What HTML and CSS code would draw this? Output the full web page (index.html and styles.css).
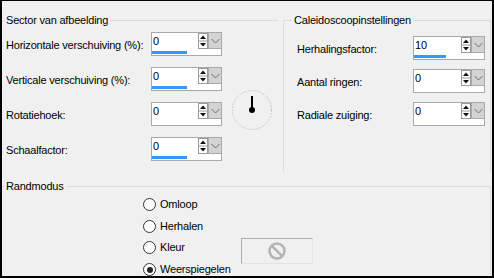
FILE: index.html
```html
<!DOCTYPE html>
<html lang="nl">
<head>
    <meta charset="UTF-8">
    <title>Caleidoscoop</title>
    <link rel="stylesheet" href="styles.css">
</head>
<body>
<div class="window">
    <div class="top">
        <!-- Sector -->
        <fieldset class="group sector">
            <legend>Sector van afbeelding</legend>
            <div class="rows sector-rows">
                <span class="lbl">Horizontale verschuiving (%):</span>
                <div class="spin">
                    <div class="spin-top">
                        <span class="spin-value">0</span>
                        <span class="spin-arrows"><svg width="10" height="16" viewBox="0 0 10 16"><rect x="0.5" y="0.5" width="9" height="15" fill="#fff" stroke="#9a9a9a"/><line x1="0" y1="8" x2="10" y2="8" stroke="#9a9a9a"/><path d="M5 2.5 L8 6 L2 6 Z" fill="#111"/><path d="M2 10 L8 10 L5 13.5 Z" fill="#111"/></svg></span>
                        <span class="spin-drop"><svg width="13" height="16" viewBox="0 0 13 16"><path d="M2.5 6 L6.5 10 L10.5 6" fill="none" stroke="#6d6d6d"/></svg></span>
                    </div>
                    <div class="spin-bar"><span class="bar" style="width:35px"></span></div>
                </div>
                <span class="cell-empty"></span>

                <span class="lbl">Verticale verschuiving (%):</span>
                <div class="spin">
                    <div class="spin-top">
                        <span class="spin-value">0</span>
                        <span class="spin-arrows"><svg width="10" height="16" viewBox="0 0 10 16"><rect x="0.5" y="0.5" width="9" height="15" fill="#fff" stroke="#9a9a9a"/><line x1="0" y1="8" x2="10" y2="8" stroke="#9a9a9a"/><path d="M5 2.5 L8 6 L2 6 Z" fill="#111"/><path d="M2 10 L8 10 L5 13.5 Z" fill="#111"/></svg></span>
                        <span class="spin-drop"><svg width="13" height="16" viewBox="0 0 13 16"><path d="M2.5 6 L6.5 10 L10.5 6" fill="none" stroke="#6d6d6d"/></svg></span>
                    </div>
                    <div class="spin-bar"><span class="bar" style="width:35px"></span></div>
                </div>
                <span class="cell-empty"></span>

                <span class="lbl">Rotatiehoek:</span>
                <div class="spin">
                    <div class="spin-top">
                        <span class="spin-value">0</span>
                        <span class="spin-arrows"><svg width="10" height="16" viewBox="0 0 10 16"><rect x="0.5" y="0.5" width="9" height="15" fill="#fff" stroke="#9a9a9a"/><line x1="0" y1="8" x2="10" y2="8" stroke="#9a9a9a"/><path d="M5 2.5 L8 6 L2 6 Z" fill="#111"/><path d="M2 10 L8 10 L5 13.5 Z" fill="#111"/></svg></span>
                        <span class="spin-drop"><svg width="13" height="16" viewBox="0 0 13 16"><path d="M2.5 6 L6.5 10 L10.5 6" fill="none" stroke="#6d6d6d"/></svg></span>
                    </div>
                    <div class="spin-bar"></div>
                </div>
                <div class="dial">
                    <svg width="42" height="42" viewBox="0 0 42 42">
                        <circle cx="21" cy="21" r="19.5" fill="none" stroke="#fafafa" stroke-width="1"/>
                        <circle cx="21" cy="21" r="19.5" fill="none" stroke="#c4c4c4" stroke-width="1" stroke-dasharray="2 1"/>
                        <line x1="21" y1="7" x2="21" y2="21" stroke="#000" stroke-width="2"/>
                        <circle cx="21" cy="21" r="3" fill="#000"/>
                    </svg>
                </div>

                <span class="lbl">Schaalfactor:</span>
                <div class="spin">
                    <div class="spin-top">
                        <span class="spin-value">0</span>
                        <span class="spin-arrows"><svg width="10" height="16" viewBox="0 0 10 16"><rect x="0.5" y="0.5" width="9" height="15" fill="#fff" stroke="#9a9a9a"/><line x1="0" y1="8" x2="10" y2="8" stroke="#9a9a9a"/><path d="M5 2.5 L8 6 L2 6 Z" fill="#111"/><path d="M2 10 L8 10 L5 13.5 Z" fill="#111"/></svg></span>
                        <span class="spin-drop"><svg width="13" height="16" viewBox="0 0 13 16"><path d="M2.5 6 L6.5 10 L10.5 6" fill="none" stroke="#6d6d6d"/></svg></span>
                    </div>
                    <div class="spin-bar"><span class="bar" style="width:35px"></span></div>
                </div>
                <span class="cell-empty"></span>
            </div>
        </fieldset>

        <!-- Caleidoscoop -->
        <fieldset class="group kaleido">
            <legend>Caleidoscoopinstellingen</legend>
            <div class="rows kaleido-rows">
                <span class="lbl">Herhalingsfactor:</span>
                <div class="spin spin-wide">
                    <div class="spin-top">
                        <span class="spin-value">10</span>
                        <span class="spin-arrows"><svg width="10" height="16" viewBox="0 0 10 16"><rect x="0.5" y="0.5" width="9" height="15" fill="#fff" stroke="#9a9a9a"/><line x1="0" y1="8" x2="10" y2="8" stroke="#9a9a9a"/><path d="M5 2.5 L8 6 L2 6 Z" fill="#111"/><path d="M2 10 L8 10 L5 13.5 Z" fill="#111"/></svg></span>
                        <span class="spin-drop"><svg width="13" height="16" viewBox="0 0 13 16"><path d="M2.5 6 L6.5 10 L10.5 6" fill="none" stroke="#6d6d6d"/></svg></span>
                    </div>
                    <div class="spin-bar"><span class="bar" style="width:32px"></span></div>
                </div>

                <span class="lbl">Aantal ringen:</span>
                <div class="spin spin-wide">
                    <div class="spin-top">
                        <span class="spin-value">0</span>
                        <span class="spin-arrows"><svg width="10" height="16" viewBox="0 0 10 16"><rect x="0.5" y="0.5" width="9" height="15" fill="#fff" stroke="#9a9a9a"/><line x1="0" y1="8" x2="10" y2="8" stroke="#9a9a9a"/><path d="M5 2.5 L8 6 L2 6 Z" fill="#111"/><path d="M2 10 L8 10 L5 13.5 Z" fill="#111"/></svg></span>
                        <span class="spin-drop"><svg width="13" height="16" viewBox="0 0 13 16"><path d="M2.5 6 L6.5 10 L10.5 6" fill="none" stroke="#6d6d6d"/></svg></span>
                    </div>
                    <div class="spin-bar"></div>
                </div>

                <span class="lbl">Radiale zuiging:</span>
                <div class="spin spin-wide">
                    <div class="spin-top">
                        <span class="spin-value">0</span>
                        <span class="spin-arrows"><svg width="10" height="16" viewBox="0 0 10 16"><rect x="0.5" y="0.5" width="9" height="15" fill="#fff" stroke="#9a9a9a"/><line x1="0" y1="8" x2="10" y2="8" stroke="#9a9a9a"/><path d="M5 2.5 L8 6 L2 6 Z" fill="#111"/><path d="M2 10 L8 10 L5 13.5 Z" fill="#111"/></svg></span>
                        <span class="spin-drop"><svg width="13" height="16" viewBox="0 0 13 16"><path d="M2.5 6 L6.5 10 L10.5 6" fill="none" stroke="#6d6d6d"/></svg></span>
                    </div>
                    <div class="spin-bar"></div>
                </div>
            </div>
        </fieldset>
    </div>

    <!-- Randmodus -->
    <fieldset class="group rand">
        <legend>Randmodus</legend>
        <div class="radios">
            <span class="radio"><span class="dot"></span>Omloop</span>
            <span class="cell-empty"></span>
            <span class="radio"><span class="dot"></span>Herhalen</span>
            <span class="cell-empty"></span>
            <span class="radio"><span class="dot"></span>Kleur</span>
            <div class="color-box">
                <svg width="20" height="20" viewBox="0 0 20 20">
                    <circle cx="10" cy="10" r="7.5" fill="none" stroke="#b4b4b4" stroke-width="2.5"/>
                    <line x1="4.8" y1="4.8" x2="15.2" y2="15.2" stroke="#b4b4b4" stroke-width="2.5"/>
                </svg>
            </div>
            <span class="radio"><span class="dot checked"></span>Weerspiegelen</span>
            <span class="cell-empty"></span>
        </div>
    </fieldset>
</div>
</body>
</html>
```

FILE: styles.css
```css
body {
    margin: 0;
    background-color: #f0f0f0;
    font-family: "Liberation Sans", Arial, sans-serif;
    font-size: 11px;
    letter-spacing: -0.2px;
    line-height: 13px;
    color: #000;
}

.window {
    width: 494px;
    height: 278px;
    box-sizing: border-box;
    border: 2px solid #000;
    border-top-width: 1px;
    padding-top: 13px;
    background-color: #f0f0f0;
    overflow: hidden;
}

.top {
    display: flex;
    height: 158px;
}

/* group boxes */
.group {
    margin: 0;
    padding: 0;
    border: none;
    border-top: 1px solid #dcdcdc;
    min-width: 0;
}

.group legend {
    padding: 0 2px;
    margin-left: 2px;
}

.sector {
    width: 276px;
}

.kaleido {
    width: 208px;
    box-sizing: border-box;
    margin-left: 5px;
    border-left: 1px solid #dcdcdc;
    border-right: 1px solid #dcdcdc;
}

.kaleido legend {
    margin-left: 8px;
}

.rand {
    margin-top: 8px;
    width: 489px;
    box-sizing: border-box;
    border-right: 1px solid #dcdcdc;
    height: 100px;
}

/* rows of label + spin control */
.rows {
    display: grid;
    align-items: center;
}

.sector-rows {
    grid-template-columns: 145px 71px 1fr;
    grid-template-rows: repeat(4, 24px);
    row-gap: 11px;
    padding: 5px 0 0 4px;
}

.kaleido-rows {
    grid-template-columns: 116px 72px;
    grid-template-rows: repeat(3, 24px);
    row-gap: 9px;
    padding: 9px 0 0 13px;
}

.lbl {
    padding-top: 3px;
    white-space: nowrap;
}

/* spin control */
.spin {
    width: 71px;
    height: 24px;
    box-sizing: border-box;
    border: 1px solid #a9a9a9;
    background-color: #fff;
}

.spin-wide {
    width: 72px;
}

.spin-top {
    display: flex;
    height: 16px;
}

.spin-value {
    flex: 1;
    padding: 2px 0 0 1px;
}

.spin-arrows {
    width: 10px;
    height: 16px;
}

.spin-drop {
    width: 13px;
    height: 16px;
    border-left: 1px solid #a9a9a9;
    border-bottom: 1px solid #a9a9a9;
    box-sizing: border-box;
    background-color: #d3d3d3;
}

.spin-arrows svg,
.spin-drop svg {
    display: block;
}

.spin-bar {
    height: 6px;
    padding-top: 2px;
    box-sizing: border-box;
}

.bar {
    display: block;
    height: 3px;
    background-color: #3399ff;
}

.dial {
    align-self: start;
    margin: -13px 0 0 9px;
    width: 42px;
    height: 42px;
}

.dial svg {
    display: block;
}

/* radio buttons */
.radios {
    display: grid;
    grid-template-columns: 98px 72px;
    grid-template-rows: repeat(4, 21.6px);
    align-items: center;
    padding: 1px 0 0 141px;
}

.radio {
    display: flex;
    align-items: center;
    gap: 4px;
    white-space: nowrap;
}

.dot {
    width: 13px;
    height: 13px;
    box-sizing: border-box;
    border: 1px solid #333;
    border-radius: 50%;
    background-color: #fff;
    position: relative;
}

.dot.checked::after {
    content: "";
    position: absolute;
    left: 2.5px;
    top: 2.5px;
    width: 6px;
    height: 6px;
    border-radius: 50%;
    background-color: #222;
}

.color-box {
    align-self: start;
    margin-top: 1px;
    width: 72px;
    height: 26px;
    box-sizing: border-box;
    border: 1px solid #adadad;
    border-right-color: #e3e3e3;
    border-bottom-color: #e3e3e3;
    display: flex;
    align-items: center;
    justify-content: center;
}

.color-box svg {
    display: block;
}
```
